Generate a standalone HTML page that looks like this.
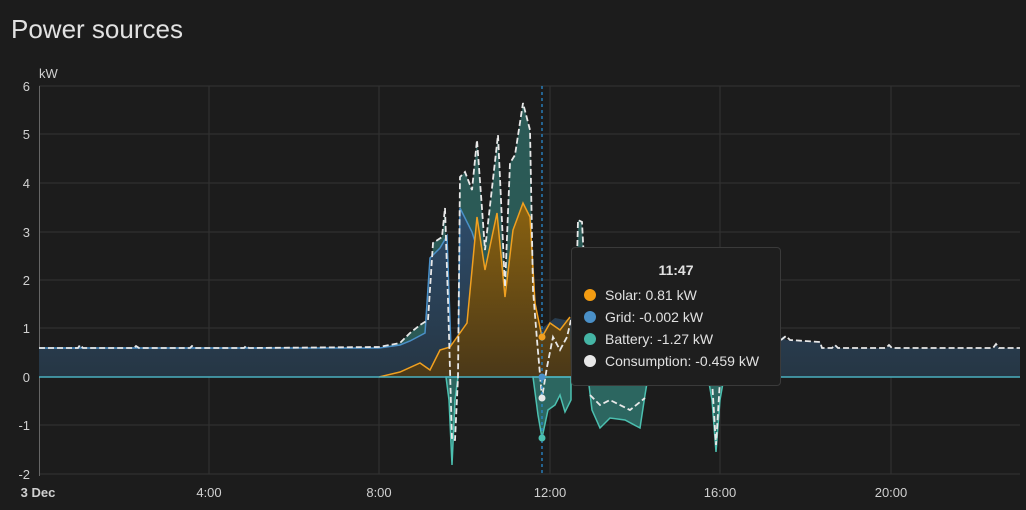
<!DOCTYPE html>
<html><head><meta charset="utf-8"><style>
html,body{margin:0;padding:0;background:#1c1c1c;width:1026px;height:510px;overflow:hidden;font-family:"Liberation Sans",Arial,sans-serif}
.t{position:absolute;left:11px;top:14px;font-size:26px;color:#e1e1e1}
.tip{position:absolute;left:571px;top:247px;width:208px;height:137px;background:#1e1e1e;border:1px solid #3a3a3a;border-radius:4px;color:#e1e1e1;font-size:14px}
.tip .h{text-align:center;font-weight:bold;margin-top:14px;height:22px}
.tip .r{height:22px;line-height:22px;padding-left:33px;position:relative}
.tip .r i{position:absolute;left:12px;top:5px;width:12px;height:12px;border-radius:6px}
</style></head><body>
<div class="t">Power sources</div>
<svg width="1026" height="510" style="position:absolute;left:0;top:0">
<defs>
<linearGradient id="sg" x1="0" y1="0" x2="0" y2="1"><stop offset="0" stop-color="#8a6210"/><stop offset="1" stop-color="#4a3818"/></linearGradient>
<linearGradient id="gg" x1="0" y1="0" x2="0" y2="1"><stop offset="0" stop-color="#2e4c6a"/><stop offset="1" stop-color="#263644"/></linearGradient>
</defs>
<g stroke="#333" stroke-width="1">
<line x1="39" y1="86" x2="1020" y2="86"/><line x1="39" y1="134" x2="1020" y2="134"/><line x1="39" y1="183" x2="1020" y2="183"/><line x1="39" y1="232" x2="1020" y2="232"/><line x1="39" y1="280" x2="1020" y2="280"/><line x1="39" y1="328" x2="1020" y2="328"/><line x1="39" y1="425" x2="1020" y2="425"/><line x1="39" y1="474" x2="1020" y2="474"/>
<line x1="209" y1="86" x2="209" y2="474"/><line x1="379" y1="86" x2="379" y2="474"/><line x1="550" y1="86" x2="550" y2="474"/><line x1="720" y1="86" x2="720" y2="474"/><line x1="891" y1="86" x2="891" y2="474"/>
</g>
<line x1="39.5" y1="86" x2="39.5" y2="476" stroke="#666"/>
<!-- battery positive fill -->
<path d="M379 348 L400 343 L410 333 L420 325 L428 320 L433 243 L442 237 L445 208 L448 300 L452 377 L458 377 L460 177 L465 172 L472 190 L477 140 L485 250 L498 135 L505 287 L510 163 L515 155 L523 103 L530 130 L533 290 L537 340 L540 377 L570 377 L576 300 L578 220 L582 222 L586 300 L590 377 L379 377Z" fill="#2c5e5a" opacity="0.95"/>
<!-- grid fill -->
<path d="M39 348 L78 348 L80 345 L83 348 L134 348 L136 346 L139 348 L190 348 L192 346 L195 348 L244 348 L246 346 L249 348 L379 348 L400 345 L410 341 L425 333 L430 258 L440 248 L447 236 L452 377 L458 377 L460 208 L472 232 L485 273 L497 300 L505 310 L540 330 L555 318 L565 320 L571 318 L571 377 L590 377 L720 377 L725 350 L780 340 L783 336 L786 340 L820 342 L822 348 L832 348 L835 345 L838 348 L886 348 L889 345 L892 348 L993 348 L996 344 L999 348 L1020 348 L1020 377 L39 377Z" fill="url(#gg)" stroke="none"/>
<path d="M39 348 L379 348 L400 345 L410 341 L425 333 L430 258 L440 248 L447 236 L452 377 L458 377 L460 208 L472 232 L485 273" fill="none" stroke="#4a90c8" stroke-width="1.5"/>
<!-- solar -->
<path d="M379 377 L400 372 L420 363 L430 370 L440 350 L450 347 L467 323 L477 217 L485 270 L497 213 L505 297 L513 230 L523 203 L530 217 L535 303 L542 337 L550 323 L560 330 L570 317 L571 377 Z" fill="url(#sg)"/>
<path d="M379 377 L400 372 L420 363 L430 370 L440 350 L450 347 L467 323 L477 217 L485 270 L497 213 L505 297 L513 230 L523 203 L530 217 L535 303 L542 337 L550 323 L560 330 L570 317" fill="none" stroke="#f0a020" stroke-width="1.5"/>
<!-- battery negative -->
<path d="M446 377 L449 400 L452 465 L455 400 L458 377Z M533 377 L538 415 L542 438 L548 410 L555 405 L560 395 L565 412 L571 400 L571 377Z M588 377 L592 410 L600 428 L610 418 L625 420 L640 428 L645 395 L648 377Z M708 377 L712 400 L716 452 L720 400 L724 377Z" fill="#2c6660" stroke="#4cc0b0" stroke-width="1.5"/>
<line x1="39" y1="377" x2="1020" y2="377" stroke="#4ab0c0" stroke-width="1.5"/>
<!-- consumption -->
<path d="M39 348 L78 348 L80 345 L83 348 L134 348 L136 346 L139 348 L190 348 L192 346 L195 348 L244 348 L246 346 L249 348 L379 347 L400 343 L410 333 L420 325 L428 320 L433 243 L442 237 L445 208 L448 300 L452 440 L455 440 L458 377 L460 177 L465 172 L472 190 L477 140 L485 250 L498 135 L505 287 L510 163 L515 155 L523 103 L530 130 L533 290 L537 340 L542 398 L547 367 L553 337 L560 350 L567 337 L571 320 M576 300 L578 220 L582 222 L586 300 M590 395 L600 405 L610 400 L630 410 L645 398 M712 380 L716 445 L720 380 M781 340 L786 336 L790 340 L820 342 L822 348 L832 348 L835 345 L838 348 L886 348 L889 345 L892 348 L993 348 L996 344 L999 348 L1020 348" fill="none" stroke="#e8e8e8" stroke-width="1.8" stroke-dasharray="6 3"/>
<line x1="542" y1="86" x2="542" y2="474" stroke="#2a8ad0" stroke-width="1.3" stroke-dasharray="3 3"/>
<circle cx="542" cy="337" r="3.5" fill="#f0a020"/><circle cx="542" cy="377" r="3.5" fill="#4a90c8"/><circle cx="542" cy="398" r="3.5" fill="#e8e8e8"/><circle cx="542" cy="438" r="3.5" fill="#4cc0b0"/>
<g fill="#d0d0d0" font-size="13" text-anchor="end" font-family="Liberation Sans,sans-serif">
<text x="30" y="91">6</text><text x="30" y="139">5</text><text x="30" y="188">4</text><text x="30" y="237">3</text><text x="30" y="285">2</text><text x="30" y="333">1</text><text x="30" y="382">0</text><text x="30" y="430">-1</text><text x="30" y="479">-2</text>
</g>
<text x="39" y="78" fill="#d0d0d0" font-size="13">kW</text>
<g fill="#d0d0d0" font-size="13" text-anchor="middle">
<text x="38" y="497" font-weight="bold">3 Dec</text><text x="209" y="497">4:00</text><text x="379" y="497">8:00</text><text x="550" y="497">12:00</text><text x="720" y="497">16:00</text><text x="891" y="497">20:00</text>
</g>
</svg>
<div class="tip">
<div class="h">11:47</div>
<div class="r"><i style="background:#f39c12"></i>Solar: 0.81 kW</div>
<div class="r"><i style="background:#4a90c8"></i>Grid: -0.002 kW</div>
<div class="r"><i style="background:#45b5a5"></i>Battery: -1.27 kW</div>
<div class="r"><i style="background:#e8e8e8"></i>Consumption: -0.459 kW</div>
</div>
</body></html>
